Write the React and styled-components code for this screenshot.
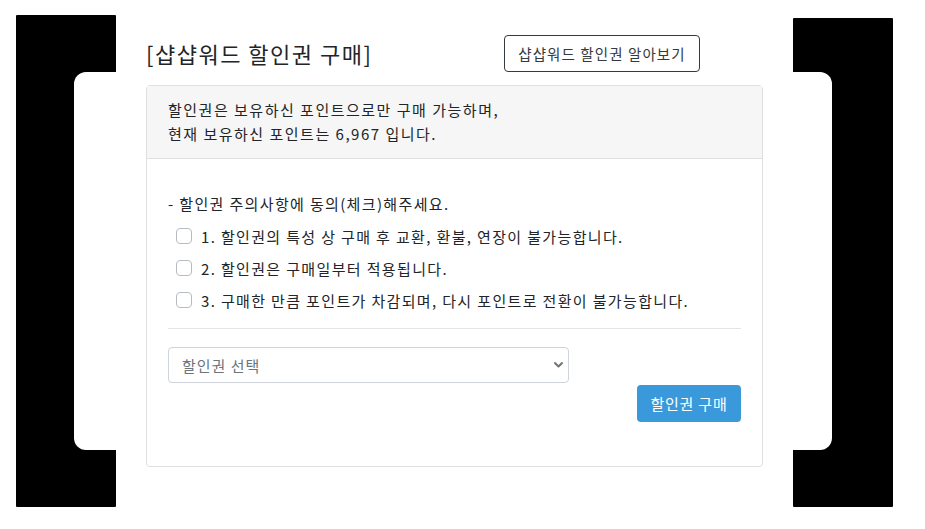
import React from 'react';
import styled, { createGlobalStyle } from 'styled-components';

const GlobalStyle = createGlobalStyle`
  html, body {
    margin: 0;
    padding: 0;
    background: #fff;
  }
  body {
    font-family: "Noto Sans CJK KR", "Noto Sans", sans-serif;
    color: #212529;
  }
`;

const Page = styled.div`
  position: relative;
  width: 925px;
  height: 529px;
  overflow: hidden;
`;

// decorative frame lying under the content
const Backdrop = styled.div`
  position: absolute;
  inset: 0;
  z-index: 0;
`;

const BlackBar = styled.div`
  position: absolute;
  top: ${(p) => p.top}px;
  left: ${(p) => p.left}px;
  width: 100px;
  height: ${(p) => 507 - p.top}px;
  background: #000;
  border-radius: 1px;
`;

const WhitePanel = styled.div`
  position: absolute;
  top: 72px;
  left: 74px;
  width: 758px;
  height: 378px;
  background: #fff;
  border-radius: 12px;
`;

const Container = styled.div`
  position: relative;
  z-index: 1;
  width: 617px;
  margin-left: 146px;
  padding-top: 35px;
`;

const TitleRow = styled.div`
  display: grid;
  grid-template-columns: 358px auto;
  align-items: center;
  height: 37px;
  margin-bottom: 13px;
`;

const Title = styled.h2`
  margin: 0;
  font-size: 22px;
  font-weight: 400;
  line-height: 1.2;
  letter-spacing: 1.5px;
`;

const OutlineButton = styled.button`
  justify-self: start;
  width: 196px;
  height: 37px;
  border: 1px solid #343a40;
  border-radius: 4px;
  background: #fff;
  color: #343a40;
  font-family: inherit;
  font-size: 14.5px;
  letter-spacing: 1.1px;
  padding: 0;
`;

const Card = styled.div`
  border: 1px solid #dfdfdf;
  border-radius: 4px;
  background: #fff;
`;

const CardHeader = styled.div`
  background: #f6f6f6;
  border-bottom: 1px solid #dfdfdf;
  padding: 12px 21px 12px;
  font-size: 15px;
  line-height: 24px;
  letter-spacing: 1.5px;
`;

const CardBody = styled.div`
  padding: 29px 21px 44px;
  font-size: 15px;
  letter-spacing: 1.35px;
`;

const Notice = styled.div`
  height: 32px;
  line-height: 32px;
`;

const CheckRow = styled.label`
  display: flex;
  align-items: center;
  height: 32px;
  padding-left: 8px;
  gap: 9px;
`;

const Box = styled.input.attrs({ type: 'checkbox' })`
  appearance: none;
  margin: 0;
  width: 16px;
  height: 16px;
  border: 1px solid #b5bcc3;
  border-radius: 4px;
  background: #fff;
`;

const Divider = styled.hr`
  border: 0;
  border-top: 1px solid #e5e5e5;
  margin: 12px 0 18px;
`;

const SelectWrap = styled.div`
  position: relative;
  width: 401px;
`;

const Select = styled.select`
  appearance: none;
  width: 100%;
  height: 36px;
  border: 1px solid #ced4da;
  border-radius: 4px;
  background: #fff;
  color: #6c757d;
  font-family: inherit;
  font-size: 15px;
  letter-spacing: 1px;
  padding: 0 30px 0 13px;
`;

const Chevron = styled.svg`
  position: absolute;
  right: 5px;
  top: 14px;
  pointer-events: none;
`;

const Actions = styled.div`
  display: flex;
  justify-content: flex-end;
  margin-top: 2px;
`;

const PrimaryButton = styled.button`
  width: 104px;
  height: 37px;
  border: 0;
  border-radius: 4px;
  background: #3a99db;
  color: #fff;
  font-family: inherit;
  font-size: 15px;
  letter-spacing: 0.8px;
  padding: 0;
`;

const rules = [
  '1. 할인권의 특성 상 구매 후 교환, 환불, 연장이 불가능합니다.',
  '2. 할인권은 구매일부터 적용됩니다.',
  '3. 구매한 만큼 포인트가 차감되며, 다시 포인트로 전환이 불가능합니다.',
];

const App = () => {
  return (
    <Page>
      <GlobalStyle />
      <Backdrop>
        <BlackBar top={15} left={16} />
        <BlackBar top={18} left={793} />
        <WhitePanel />
      </Backdrop>
      <Container>
        <TitleRow>
          <Title>[샵샵워드 할인권 구매]</Title>
          <OutlineButton>샵샵워드 할인권 알아보기</OutlineButton>
        </TitleRow>
        <Card>
          <CardHeader>
            할인권은 보유하신 포인트으로만 구매 가능하며,
            <br />
            현재 보유하신 포인트는 6,967 입니다.
          </CardHeader>
          <CardBody>
            <Notice>- 할인권 주의사항에 동의(체크)해주세요.</Notice>
            {rules.map((r) => (
              <CheckRow key={r}>
                <Box />
                <span>{r}</span>
              </CheckRow>
            ))}
            <Divider />
            <SelectWrap>
              <Select defaultValue="">
                <option value="">할인권 선택</option>
              </Select>
              <Chevron width="11" height="8" viewBox="0 0 11 8">
                <path d="M2 2l3.5 3.5L9 2" fill="none" stroke="#6c757d" strokeWidth="2" strokeLinecap="round" strokeLinejoin="round" />
              </Chevron>
            </SelectWrap>
            <Actions>
              <PrimaryButton>할인권 구매</PrimaryButton>
            </Actions>
          </CardBody>
        </Card>
      </Container>
    </Page>
  );
};

export default App;
